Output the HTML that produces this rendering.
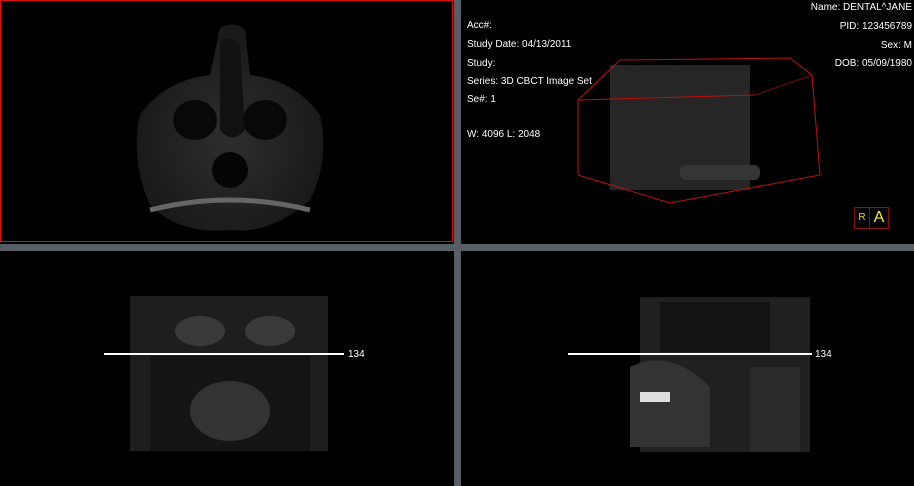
<!DOCTYPE html>
<html><head><style>
body{margin:0;width:914px;height:486px;background:#000;position:relative;overflow:hidden;font-family:"Liberation Sans",sans-serif;color:#fff;font-size:10px}
.a{position:absolute}
.t{position:absolute;font-size:10px;line-height:12px;white-space:nowrap}
</style></head><body>
<div class="a" style="left:454px;top:0;width:7px;height:486px;background:#575e66"></div>
<div class="a" style="left:0;top:244px;width:914px;height:7px;background:#575e66"></div>
<div class="a" style="left:0;top:0;width:451px;height:240px;border:1px solid #e01010;box-sizing:content-box"></div>

<svg class="a" style="left:120px;top:20px" width="220" height="225">
<defs><radialGradient id="g1" cx="50%" cy="55%" r="50%"><stop offset="0" stop-color="#2e2e2e"/><stop offset="1" stop-color="#1a1a1a"/></radialGradient></defs>
<path d="M100 8 Q115 0 125 10 L130 55 Q175 60 200 95 Q210 140 190 180 Q150 215 110 210 Q60 215 30 185 Q10 140 20 95 Q45 60 90 55 Z" fill="url(#g1)"/>
<path d="M100 20 Q112 15 120 25 L125 110 Q112 125 100 110 Z" fill="#111"/>
<ellipse cx="75" cy="100" rx="22" ry="20" fill="#080808"/><ellipse cx="145" cy="100" rx="22" ry="20" fill="#080808"/>
<ellipse cx="110" cy="150" rx="18" ry="18" fill="#050505"/>
<path d="M30 190 Q110 170 190 190" stroke="#666" stroke-width="5" fill="none"/>
</svg>

<svg class="a" style="left:570px;top:55px" width="260" height="150">
<rect x="40" y="10" width="140" height="125" fill="#262626"/>
<rect x="110" y="110" width="80" height="15" rx="6" fill="#353535"/>
<polyline points="8,120 100,148 250,120 242,20 220,3 50,5 8,45 8,120" fill="none" stroke="#c01010" stroke-width="1"/>
<line x1="8" y1="45" x2="185" y2="40" stroke="#c01010"/><line x1="185" y1="40" x2="242" y2="20" stroke="#c01010" opacity=".6"/>
</svg>
<div class="a" style="left:854px;top:207px;width:14px;height:20px;border:1px solid #8a1010;color:#dede30;font-size:10px;text-align:center;line-height:20px">R</div>
<div class="a" style="left:869px;top:207px;width:18px;height:20px;border:1px solid #8a1010;color:#f0f030;font-size:16px;text-align:center;line-height:20px">A</div>

<div class="t" style="left:467px;top:20px">Acc#:</div>
<div class="t" style="left:467px;top:39px">Study Date: 04/13/2011</div>
<div class="t" style="left:467px;top:58px">Study:</div>
<div class="t" style="left:467px;top:76px">Series: 3D CBCT Image Set</div>
<div class="t" style="left:467px;top:94px">Se#: 1</div>
<div class="t" style="left:467px;top:129px">W: 4096 L: 2048</div>
<div class="t" style="right:2px;top:2px;text-align:right">Name: DENTAL^JANE</div>
<div class="t" style="right:2px;top:21px">PID: 123456789</div>
<div class="t" style="right:2px;top:40px">Sex: M</div>
<div class="t" style="right:2px;top:58px">DOB: 05/09/1980</div>

<svg class="a" style="left:130px;top:296px" width="200" height="155">
<rect x="0" y="0" width="198" height="155" fill="#1e1e1e"/>
<rect x="20" y="60" width="160" height="95" fill="#141414"/>
<ellipse cx="100" cy="115" rx="40" ry="30" fill="#333"/>
<ellipse cx="70" cy="35" rx="25" ry="15" fill="#3a3a3a"/><ellipse cx="140" cy="35" rx="25" ry="15" fill="#3a3a3a"/>
</svg>
<div class="a" style="left:104px;top:353px;width:240px;height:2px;background:#fff"></div>
<div class="t" style="left:348px;top:349px">134</div>

<svg class="a" style="left:610px;top:297px" width="200" height="155">
<rect x="30" y="0" width="170" height="155" fill="#202020"/>
<rect x="50" y="5" width="110" height="50" fill="#131313"/>
<path d="M20 70 Q60 50 100 90 L100 150 L20 150 Z" fill="#333"/>
<rect x="30" y="95" width="30" height="10" fill="#ddd"/>
<rect x="140" y="70" width="50" height="85" fill="#2a2a2a"/>
</svg>
<div class="a" style="left:568px;top:353px;width:244px;height:2px;background:#fff"></div>
<div class="t" style="left:815px;top:349px">134</div>
</body></html>
